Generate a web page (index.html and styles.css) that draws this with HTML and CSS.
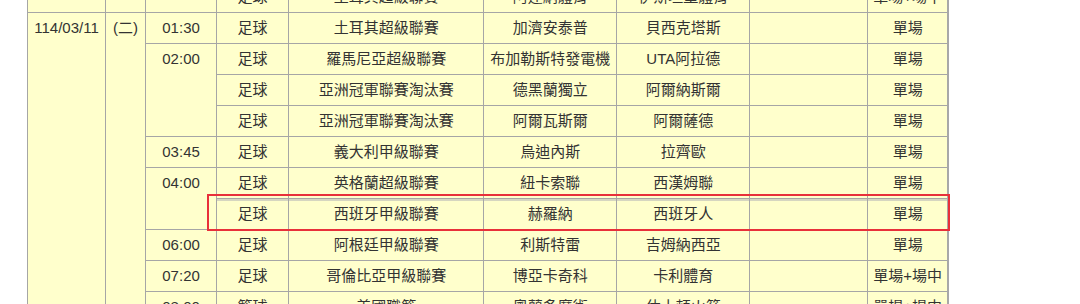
FILE: index.html
```html
<!DOCTYPE html>
<html lang="zh-Hant">
<head>
<meta charset="utf-8">
<title>賽程</title>
<link rel="stylesheet" href="styles.css">
</head>
<body>
<div class="wrap">
<table class="sched">
<colgroup>
<col class="c-date"><col class="c-day"><col class="c-time"><col class="c-sport"><col class="c-league"><col class="c-home"><col class="c-away"><col class="c-note"><col class="c-type">
</colgroup>
<tbody>
<tr class="cut">
<td></td><td></td><td></td><td>足球</td><td>土耳其超級聯賽</td><td>阿達納體育</td><td>伊斯坦堡體育</td><td></td><td>單場+場中</td>
</tr>
<tr>
<td rowspan="10" class="top">114/03/11</td><td rowspan="10" class="top">(二)</td><td>01:30</td><td>足球</td><td>土耳其超級聯賽</td><td>加濟安泰普</td><td>貝西克塔斯</td><td></td><td>單場</td>
</tr>
<tr>
<td rowspan="3" class="top">02:00</td><td>足球</td><td>羅馬尼亞超級聯賽</td><td>布加勒斯特發電機</td><td>UTA阿拉德</td><td></td><td>單場</td>
</tr>
<tr>
<td>足球</td><td>亞洲冠軍聯賽淘汰賽</td><td>德黑蘭獨立</td><td>阿爾納斯爾</td><td></td><td>單場</td>
</tr>
<tr>
<td>足球</td><td>亞洲冠軍聯賽淘汰賽</td><td>阿爾瓦斯爾</td><td>阿爾薩德</td><td></td><td>單場</td>
</tr>
<tr>
<td>03:45</td><td>足球</td><td>義大利甲級聯賽</td><td>烏迪內斯</td><td>拉齊歐</td><td></td><td>單場</td>
</tr>
<tr>
<td rowspan="2" class="top">04:00</td><td>足球</td><td>英格蘭超級聯賽</td><td>紐卡索聯</td><td>西漢姆聯</td><td></td><td>單場</td>
</tr>
<tr class="hl">
<td>足球</td><td>西班牙甲級聯賽</td><td>赫羅納</td><td>西班牙人</td><td></td><td>單場</td>
</tr>
<tr>
<td>06:00</td><td>足球</td><td>阿根廷甲級聯賽</td><td>利斯特雷</td><td>吉姆納西亞</td><td></td><td>單場</td>
</tr>
<tr>
<td>07:20</td><td>足球</td><td>哥倫比亞甲級聯賽</td><td>博亞卡奇科</td><td>卡利體育</td><td></td><td>單場+場中</td>
</tr>
<tr>
<td>08:00</td><td>籃球</td><td>美國職籃</td><td>奧蘭多魔術</td><td>休士頓火箭</td><td></td><td>單場+場中</td>
</tr>
</tbody>
</table>
<div class="mark"></div>
</div>
</body>
</html>
```
FILE: styles.css
```css
html, body {
  margin: 0;
  padding: 0;
  background: #ffffff;
}
body {
  font-family: "Liberation Sans", "Noto Sans CJK TC", sans-serif;
  font-size: 15px;
  color: #333333;
  overflow: hidden;
}
.wrap {
  position: relative;
  padding-left: 27px;
  margin-top: -19px;
}
.sched {
  border-collapse: collapse;
  table-layout: fixed;
  width: 922px;
  background: #ffffcc;
  border-right: 2px solid #a8a8a8;
}
.c-date { width: 78px; }
.c-day { width: 40px; }
.c-time { width: 71px; }
.c-sport { width: 72px; }
.c-league { width: 195px; }
.c-home { width: 133px; }
.c-away { width: 133px; }
.c-note { width: 118px; }
.c-type { width: 80px; }
.sched td {
  border: 1px solid #a6a6a6;
  height: 30px;
  padding: 0;
  text-align: center;
  vertical-align: middle;
  line-height: 18px;
  white-space: nowrap;
}
.sched td.top {
  vertical-align: top;
  padding-top: 6px;
}
.sched tr.hl td {
  box-shadow: inset 0 2px 0 #d6d6c0;
}
.mark {
  position: absolute;
  left: 207px;
  top: 213px;
  width: 739px;
  height: 33px;
  border: 2px solid #e8303a;
  pointer-events: none;
}
```
